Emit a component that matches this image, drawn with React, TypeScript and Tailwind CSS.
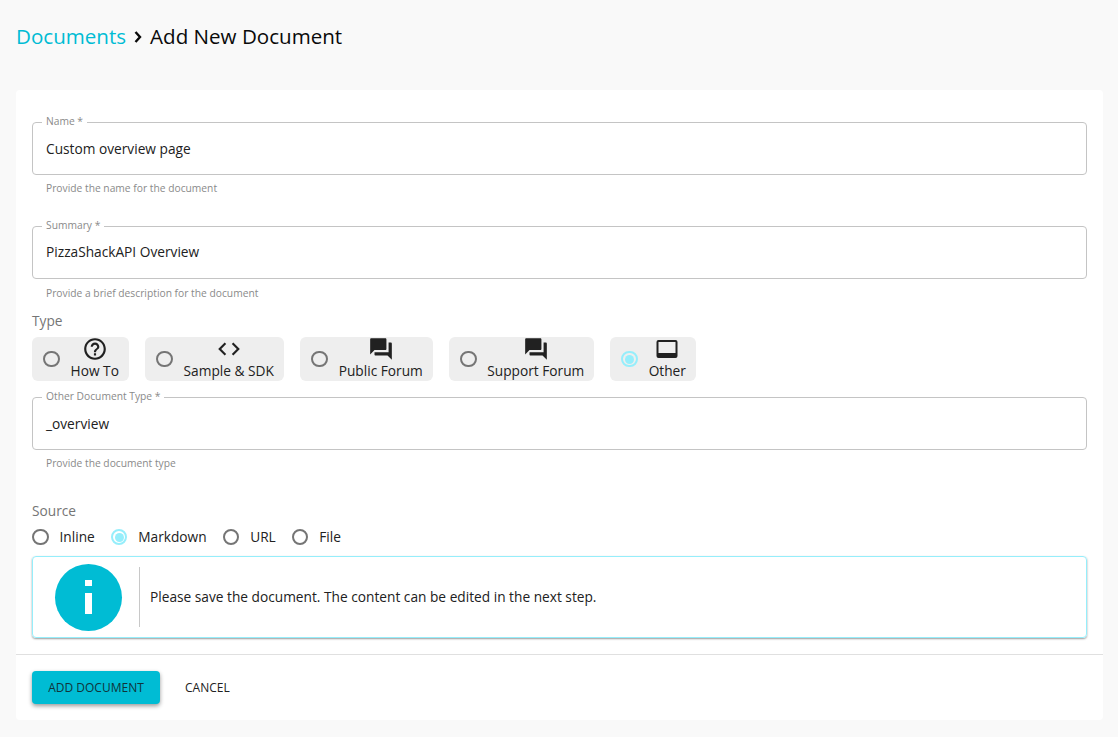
import { MdCode, MdForum, MdHelpOutline } from "react-icons/md";
import type { ReactNode } from "react";

const Field = ({ label, value, help, valueClass = "pt-[10px]", helpClass = "mt-[6px]" }: { label: string; value: string; help: string; valueClass?: string; helpClass?: string }) => (
  <div>
    <fieldset className="h-[60px] rounded border border-[#c4c4c4] px-[9px] -mt-[7px]">
      <legend className="px-[4px] pb-[2px] text-[10.28px] leading-[12px] text-[#8a8a8a]">{label}</legend>
      <div className={`pl-[4px] text-[13.71px] leading-5 text-[#212121] ${valueClass}`}>{value}</div>
    </fieldset>
    <p className={`pl-[14px] text-[10.28px] leading-[14px] text-[#8a8a8a] ${helpClass}`}>{help}</p>
  </div>
);

const Radio = ({ checked }: { checked?: boolean }) =>
  checked ? (
    <span className="flex h-[16.5px] w-[16.5px] shrink-0 items-center justify-center rounded-full border-2 border-[#96eefb]">
      <span className="h-[9px] w-[9px] rounded-full bg-[#96eefb]" />
    </span>
  ) : (
    <span className="h-[16.5px] w-[16.5px] shrink-0 rounded-full border-2 border-[#757575]" />
  );

const TypeChip = ({ icon, label, checked, width }: { icon: ReactNode; label: string; checked?: boolean; width: string }) => (
  <div className={`flex h-[44px] items-center rounded-md bg-[#eeeeee] pl-[11px] ${width}`}>
    <Radio checked={checked} />
    <div className="flex flex-1 flex-col items-center pb-[2px] pl-[1px]">
      <span className="flex h-6 items-center text-[#212121]">{icon}</span>
      <span className="text-[13.71px] leading-[19px] text-[#212121]">{label}</span>
    </div>
  </div>
);

const SourceOption = ({ label, checked }: { label: string; checked?: boolean }) => (
  <div className="flex items-center gap-[11px]">
    <Radio checked={checked} />
    <span className="text-[13.71px] text-[#212121]">{label}</span>
  </div>
);

const ScreenIcon = () => (
  <svg width="24" height="24" viewBox="0 0 24 24" fill="#212121">
    <path fillRule="evenodd" d="M3.5 3h17A2 2 0 0 1 22.5 5v14a2 2 0 0 1-2 2h-17a2 2 0 0 1-2-2V5a2 2 0 0 1 2-2zM3.5 5v11h17V5z" />
  </svg>
);

export default function App() {
  return (
    <div className="h-[737px] bg-[#f9f9f9] pl-4 pr-[15px] font-['Open_Sans',sans-serif]">
      <div className="flex h-[90px] items-start pt-[21px] text-[20.57px] leading-[30px]">
        <span className="text-[#00bcd4]">Documents</span>
        <svg className="mx-2 mt-[10px]" width="8" height="12" viewBox="0 0 8 12" fill="none" stroke="#0a0a0a" strokeWidth="2.4">
          <polyline points="1.5,1 6,6 1.5,11" />
        </svg>
        <span className="text-[#0a0a0a]">Add New Document</span>
      </div>
      <div className="h-[630px] rounded bg-white">
        <div className="px-4 pt-[32px]">
          <Field label="Name *" value="Custom overview page" help="Provide the name for the document" />
          <div className="mt-[31px]">
            <Field label="Summary *" value="PizzaShackAPI Overview" help="Provide a brief description for the document" valueClass="pt-[9px]" helpClass="mt-[7px]" />
          </div>
          <p className="mt-[11px] text-[13.71px] leading-5 text-[#757575]">Type</p>
          <div className="mt-[6px] flex gap-4">
            <TypeChip width="w-[97px]" label="How To" icon={<MdHelpOutline className="text-[26px]" />} />
            <TypeChip width="w-[139px]" label="Sample & SDK" icon={<MdCode className="text-[26px]" />} />
            <TypeChip width="w-[133px]" label="Public Forum" icon={<MdForum className="text-[26px]" />} />
            <TypeChip width="w-[145px]" label="Support Forum" icon={<MdForum className="text-[26px]" />} />
            <TypeChip width="w-[86px]" label="Other" checked icon={<ScreenIcon />} />
          </div>
          <div className="mt-[16px]">
            <Field label="Other Document Type *" value="_overview" help="Provide the document type" />
          </div>
          <p className="mt-[31px] text-[13.71px] leading-5 text-[#757575]">Source</p>
          <div className="mt-[6px] flex h-5 items-center gap-4">
            <SourceOption label="Inline" />
            <SourceOption label="Markdown" checked />
            <SourceOption label="URL" />
            <SourceOption label="File" />
          </div>
          <div className="mt-[9px] flex h-[82px] items-center rounded border border-[#96eefb] shadow-[0_1px_2px_rgba(0,0,0,0.4)]">
            <div className="ml-[22px] flex h-[67px] w-[67px] items-center justify-center rounded-full bg-[#00bcd4]">
              <svg width="10" height="34" viewBox="0 0 10 34">
                <rect x="1" y="0" width="7" height="6" fill="#fff" />
                <rect x="1" y="13" width="7" height="21" fill="#fff" />
              </svg>
            </div>
            <div className="ml-[17px] h-[60px] w-px bg-[#c8c8c8]" />
            <p className="ml-[10px] text-[13.71px] text-[#212121]">Please save the document. The content can be edited in the next step.</p>
          </div>
        </div>
        <div className="mt-4 border-t border-[#e0e0e0] px-4 pt-4">
          <div className="flex items-center gap-[10px]">
            <button className="h-[33px] w-[128px] rounded bg-[#00bcd4] text-xs text-[#10343a] shadow-[0_2px_4px_rgba(0,0,0,0.4)]">ADD DOCUMENT</button>
            <button className="h-[33px] px-[15px] text-xs text-[#212121]">CANCEL</button>
          </div>
        </div>
      </div>
    </div>
  );
}
